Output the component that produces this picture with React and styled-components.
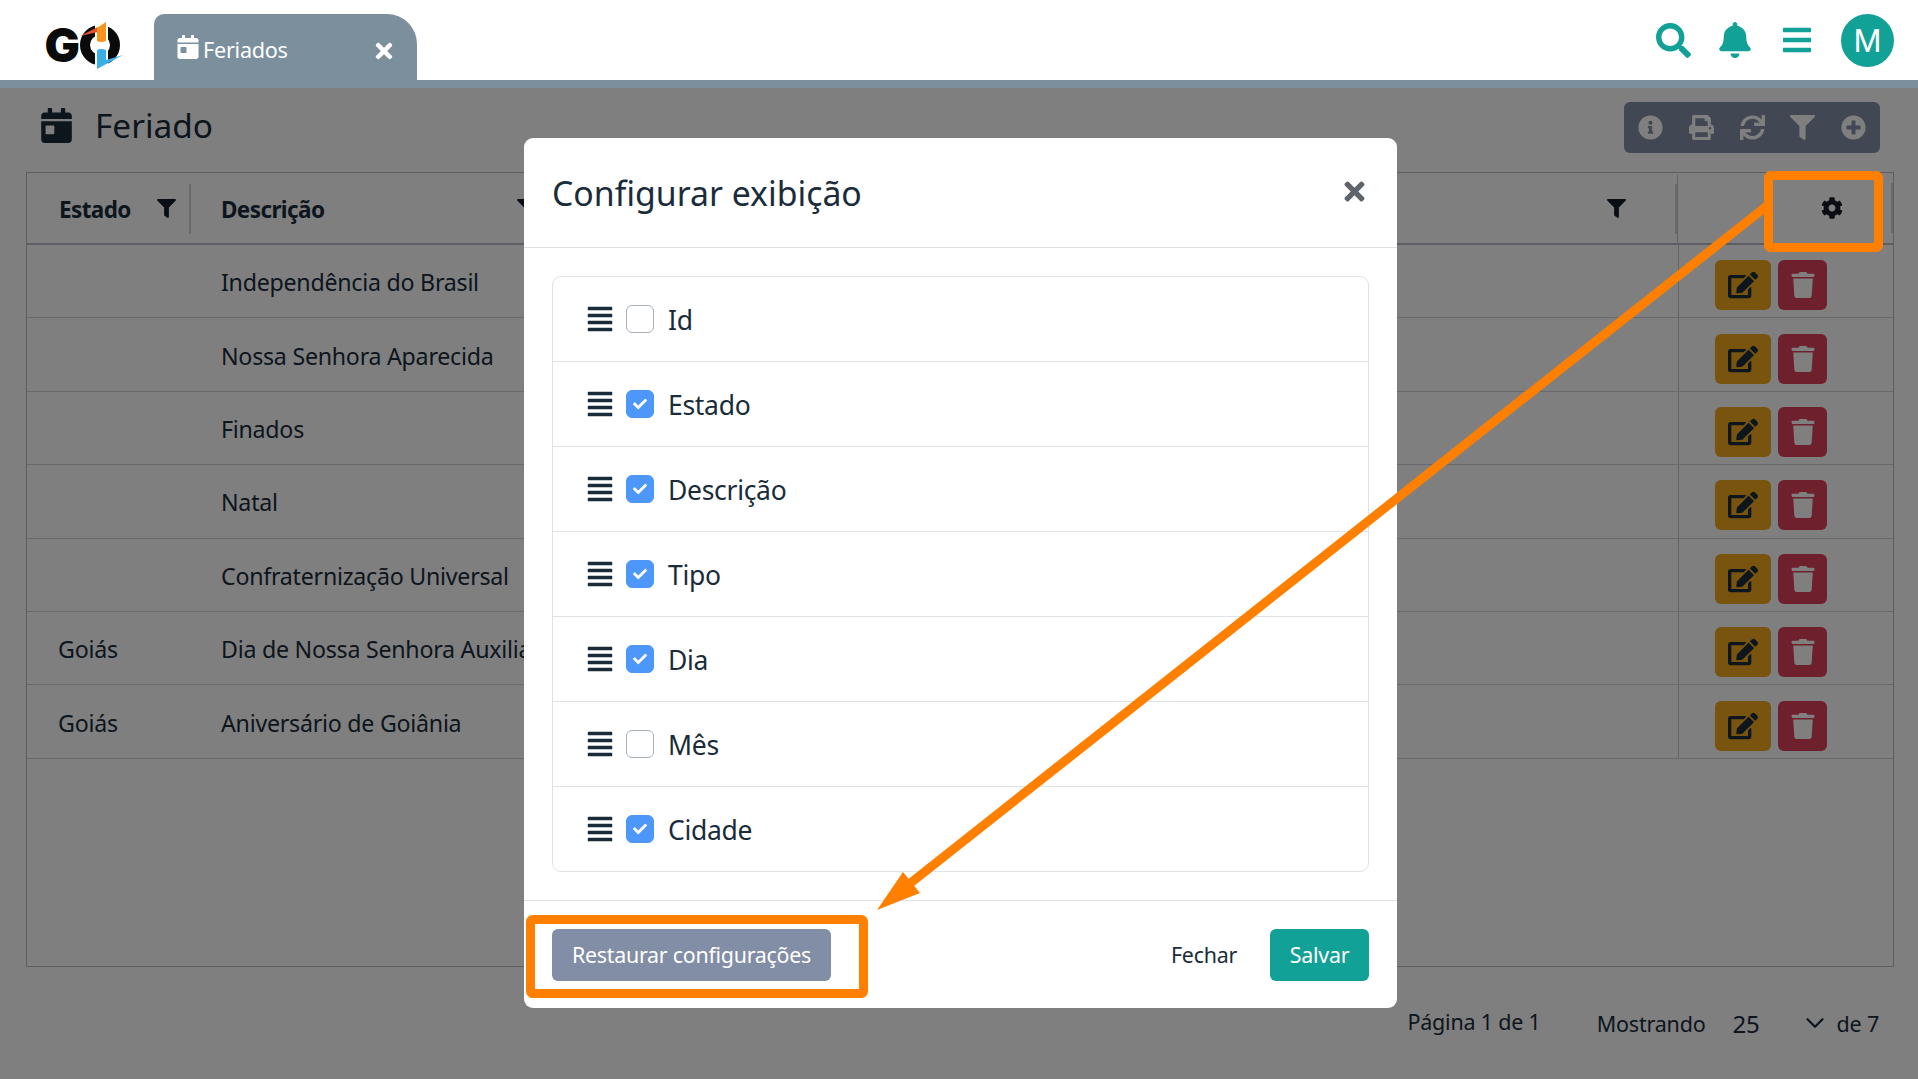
import React from "react";
import styled, { createGlobalStyle } from "styled-components";
import {
  FaCalendarDay, FaTimes, FaSearch, FaBell, FaBars, FaInfoCircle, FaPrint, FaSync,
  FaFilter, FaPlusCircle, FaCog, FaEdit, FaTrash, FaAlignJustify, FaCheck,
} from "react-icons/fa";
import { ChevronDown } from "lucide-react";

const Global = createGlobalStyle`
  html, body { margin: 0; padding: 0; background: #fff; }
  * { box-sizing: border-box; }
  body { font-family: "Noto Sans", "Open Sans", sans-serif; color: #1a2c3a; }
`;

const Root = styled.div`
  position: relative; width: 1918px; height: 1079px; overflow: hidden; background: #fff;
  font-size: 23.2px; letter-spacing: -0.25px;
`;
const Header = styled.header`
  position: relative; z-index: 3; height: 88px; background: #fff;
  border-bottom: 8px solid #7b909c; display: flex; align-items: flex-end;
  padding-left: 40px; padding-right: 24px;
`;
const LogoBox = styled.div`
  width: 114px; height: 80px; flex: none; display: flex; align-items: flex-start; padding-top: 18px;
`;
const Tab = styled.div`
  width: 263px; height: 66px; background: #7b909c; color: #fff; border-radius: 10px 30px 0 0;
  display: flex; align-items: center; padding: 0 21px 0 22px; gap: 3px; font-size: 21.6px;
  svg { flex: none; }
`;
const TabLabel = styled.span` flex: 1; padding-top: 4px; `;
const HeaderTools = styled.div`
  margin-left: auto; height: 80px; display: flex; align-items: center; color: #12a196;
`;
const ToolSlot = styled.div`
  width: ${p => p.$w}px; display: flex; justify-content: flex-start;
`;
const Avatar = styled.div`
  width: 53px; height: 53px; border-radius: 50%; background: #12a196; color: #fff;
  display: flex; align-items: center; justify-content: center; font: 400 31px "Inter", sans-serif;
`;
const Page = styled.main`
  padding: 14px 24px 0 26px;
`;
const TitleBar = styled.div`
  display: flex; align-items: center; height: 51px; padding-left: 13px; padding-right: 14px;
`;
const Title = styled.h1`
  margin: 0 0 0 21px; font-size: 33.4px; font-weight: 400; letter-spacing: 0; flex: 1; padding-bottom: 5px;
`;
const Toolbar = styled.div`
  width: 256px; height: 51px; background: #828ea6; border-radius: 6px; color: #fff;
  display: flex; align-items: center; justify-content: space-between; padding: 0 14px;
`;
const Table = styled.div`
  margin-top: 19px; height: 795px; border: 1px solid #b8bcc4;
  display: flex; flex-direction: column;
`;
const HeadRow = styled.div`
  display: flex; height: 72px; border-bottom: 2px solid #b8bcc8; font-weight: 700; align-items: center;
  letter-spacing: -0.6px; font-size: 22.5px; padding-top: 2px; flex: none;
`;
const Row = styled.div`
  display: flex; height: 73.4px; border-bottom: 1px solid #cfd3da; align-items: center; flex: none;
`;
const EstadoCell = styled.div`
  width: 164px; padding-left: ${p => (p.$head ? 32 : 31)}px; display: flex; align-items: center; height: 100%;
  padding-top: ${p => (p.$head ? 0 : 2)}px;
`;
const DescCell = styled.div`
  width: 1487px; flex: none; padding-left: 30px; padding-top: 2px; height: 100%; display: flex; align-items: center; white-space: nowrap;
`;
const ActionCell = styled.div`
  flex: 1; height: 100%; border-left: 1px solid #c5c8ce; display: flex; align-items: center;
  gap: 7px; padding-left: 36px; padding-top: 8px;
`;
const HeadEnd = styled.div`
  flex: none; width: 216px; height: 100%; border-left: 1px solid #c5c8ce; display: flex; align-items: center;
  padding-left: 143px; padding-bottom: 2px; justify-content: space-between;
`;
const HeadFilter = styled.div`
  margin-left: auto; padding-right: ${p => p.$right}px; display: flex; align-items: center; color: #111c26;
  padding-bottom: 2px;
`;
const HeadFilterAt = styled.div`
  margin-left: ${p => p.$left}px; display: flex; align-items: center; color: #111c26; padding-bottom: 2px;
`;
const Sep = styled.div`
  width: 2px; height: 50px; background: #d4d4d4; flex: none;
`;
const DescHead = styled.div`
  flex: 1; display: flex; align-items: center; padding-left: 30px; height: 100%;
`;
const ActionBtn = styled.div`
  width: ${p => p.$w}px; height: 50px; border-radius: 6px; display: flex; align-items: center; justify-content: center;
  background: ${p => p.$bg}; color: ${p => p.$fg};
`;
const Pager = styled.div`
  display: flex; align-items: center; justify-content: flex-end; height: 40px; margin-top: 36px; padding-right: 15px;
  font-size: 21.5px; letter-spacing: -0.2px;
`;
const PageInfo = styled.span` margin-right: 56px; padding-bottom: 4px; `;
const PagerValue = styled.span` margin: 0 40px 0 27px; font-size: 24px; `;
const PagerTail = styled.span` margin-left: 7px; `;

const Backdrop = styled.div`
  position: absolute; left: 0; right: 0; top: 88px; bottom: 0; background: rgba(0,0,0,.5); z-index: 1;
`;
const Modal = styled.section`
  position: absolute; z-index: 2; left: 524px; top: 138px; width: 873px; height: 870px;
  background: #fff; border-radius: 9px; display: flex; flex-direction: column;
`;
const ModalHead = styled.div`
  height: 110px; border-bottom: 1px solid #dee2e6; display: flex; align-items: center; justify-content: space-between;
  padding: 0 28px; flex: none;
`;
const ModalTitle = styled.h2`
  margin: 0; font-size: 33.8px; font-weight: 400; letter-spacing: 0;
`;
const CloseIcon = styled.div` color: #5d646b; display: flex; padding-bottom: 2px; `;
const ModalBody = styled.div` padding: 28px 28px 0; height: 653px; flex: none; border-bottom: 1px solid #dee2e6; `;
const List = styled.div`
  border: 1px solid #dfe2e6; border-radius: 9px; height: 596px; display: flex; flex-direction: column;
`;
const Item = styled.div`
  flex: 1; display: flex; align-items: center; padding-left: 33px;
  border-top: ${p => (p.$first ? "0" : "1px solid #dfe2e6")};
  color: #1a2c3a;
  svg { flex: none; }
`;
const Handle = styled.span` display: flex; `;
const Check = styled.span`
  width: 28px; height: 28px; border-radius: 6px; margin: 0 14px 0 12px; flex: none;
  display: flex; align-items: center; justify-content: center; color: #fff;
  background: ${p => (p.$on ? "#4d97fb" : "#fff")};
  border: 1px solid ${p => (p.$on ? "#4d97fb" : "#a9b1ba")};
`;
const ItemLabel = styled.span` font-size: 26.5px; letter-spacing: -0.3px; padding-top: 2px; `;
const ModalFoot = styled.div`
  flex: 1; display: flex; align-items: center; padding: 0 28px; justify-content: space-between;
  font-size: 21.4px;
`;
const Btn = styled.div`
  height: 52px; border-radius: 6px; display: flex; align-items: center; justify-content: center;
  width: ${p => p.$w}px; background: ${p => p.$bg}; color: #fff;
`;
const FootRight = styled.div` display: flex; align-items: center; `;
const Fechar = styled.span` margin-right: 33px; `;
const Annotation = styled.svg`
  position: absolute; left: 0; top: 0; z-index: 4; pointer-events: none;
`;

function Logo() {
  return (
    <svg width="90" height="56" viewBox="40 18 90 56">
      <text x="44.5" y="62" fontFamily="Inter" fontWeight="900" fontSize="47" fill="#0a0a0a">G</text>
      <circle cx="100" cy="45" r="15" fill="none" stroke="#0a0a0a" strokeWidth="10" />
      <rect x="95" y="20" width="13" height="50" fill="#fff" />
      <path d="M80 36 L98 27 L98 32 Z" fill="#e8502a" />
      <path d="M97 28 L106 22 L106 41 Q101 43 97 41 Z" fill="#f7941e" />
      <path d="M97 50 Q101 48 106 50 L106 60 L123 55 L97 69 Z" fill="#3baee6" />
    </svg>
  );
}

const rows = [
  ["", "Independência do Brasil"],
  ["", "Nossa Senhora Aparecida"],
  ["", "Finados"],
  ["", "Natal"],
  ["", "Confraternização Universal"],
  ["Goiás", "Dia de Nossa Senhora Auxiliadora"],
  ["Goiás", "Aniversário de Goiânia"],
];
const items = [["Id", false], ["Estado", true], ["Descrição", true], ["Tipo", true], ["Dia", true], ["Mês", false], ["Cidade", true]];

export default function App() {
  return (
    <Root>
      <Global />
      <Header>
        <LogoBox><Logo /></LogoBox>
        <Tab>
          <FaCalendarDay size={24} />
          <TabLabel>Feriados</TabLabel>
          <FaTimes size={24} style={{ marginTop: 8 }} />
        </Tab>
        <HeaderTools>
          <ToolSlot $w={61}><FaSearch size={35} /></ToolSlot>
          <ToolSlot $w={64}><FaBell size={36} /></ToolSlot>
          <ToolSlot $w={60}><FaBars size={32} /></ToolSlot>
          <Avatar>M</Avatar>
        </HeaderTools>
      </Header>
      <Page>
        <TitleBar>
          <FaCalendarDay size={35} style={{ marginBottom: 4 }} />
          <Title>Feriado</Title>
          <Toolbar>
            <FaInfoCircle size={25} />
            <FaPrint size={25} />
            <FaSync size={25} />
            <FaFilter size={25} />
            <FaPlusCircle size={25} />
          </Toolbar>
        </TitleBar>
        <Table>
          <HeadRow>
            <EstadoCell $head>
              Estado
              <HeadFilter $right={13}><FaFilter size={19} /></HeadFilter>
              <Sep />
            </EstadoCell>
            <DescHead>
              Descrição
              <HeadFilterAt $left={193}><FaFilter size={19} /></HeadFilterAt>
              <HeadFilter $right={49}><FaFilter size={19} /></HeadFilter>
              <Sep />
            </DescHead>
            <HeadEnd>
              <FaCog size={22} color="#111c26" />
              <Sep />
            </HeadEnd>
          </HeadRow>
          {rows.map((r, i) => (
            <Row key={i}>
              <EstadoCell>{r[0]}</EstadoCell>
              <DescCell>{r[1]}</DescCell>
              <ActionCell>
                <ActionBtn $w={56} $bg="#f2a91f" $fg="#1a2c3a"><FaEdit size={30} /></ActionBtn>
                <ActionBtn $w={49} $bg="#de405a" $fg="#fff"><FaTrash size={26} /></ActionBtn>
              </ActionCell>
            </Row>
          ))}
        </Table>
        <Pager>
          <PageInfo>Página 1 de 1</PageInfo>
          <span>Mostrando</span>
          <PagerValue>25</PagerValue>
          <ChevronDown size={30} strokeWidth={1.8} />
          <PagerTail>de 7</PagerTail>
        </Pager>
      </Page>
      <Backdrop />
      <Modal>
        <ModalHead>
          <ModalTitle>Configurar exibição</ModalTitle>
          <CloseIcon><FaTimes size={29} /></CloseIcon>
        </ModalHead>
        <ModalBody>
          <List>
            {items.map((it, i) => (
              <Item key={it[0]} $first={i === 0}>
                <Handle><FaAlignJustify size={28} /></Handle>
                <Check $on={it[1]}>{it[1] && <FaCheck size={14} />}</Check>
                <ItemLabel>{it[0]}</ItemLabel>
              </Item>
            ))}
          </List>
        </ModalBody>
        <ModalFoot>
          <Btn $w={279} $bg="#828ea6">Restaurar configurações</Btn>
          <FootRight>
            <Fechar>Fechar</Fechar>
            <Btn $w={99} $bg="#12a196">Salvar</Btn>
          </FootRight>
        </ModalFoot>
      </Modal>
      <Annotation width="1918" height="1079" viewBox="0 0 1918 1079">
        <rect x="1768.5" y="175.5" width="110" height="72" rx="2" fill="none" stroke="#ff8000" strokeWidth="9" />
        <rect x="530.5" y="919.5" width="333" height="74" rx="2" fill="none" stroke="#ff8000" strokeWidth="9" />
        <line x1="1768" y1="205" x2="908" y2="885" stroke="#ff8000" strokeWidth="9" />
        <polygon points="877,910 903,872 920,893" fill="#ff8000" />
      </Annotation>
    </Root>
  );
}
